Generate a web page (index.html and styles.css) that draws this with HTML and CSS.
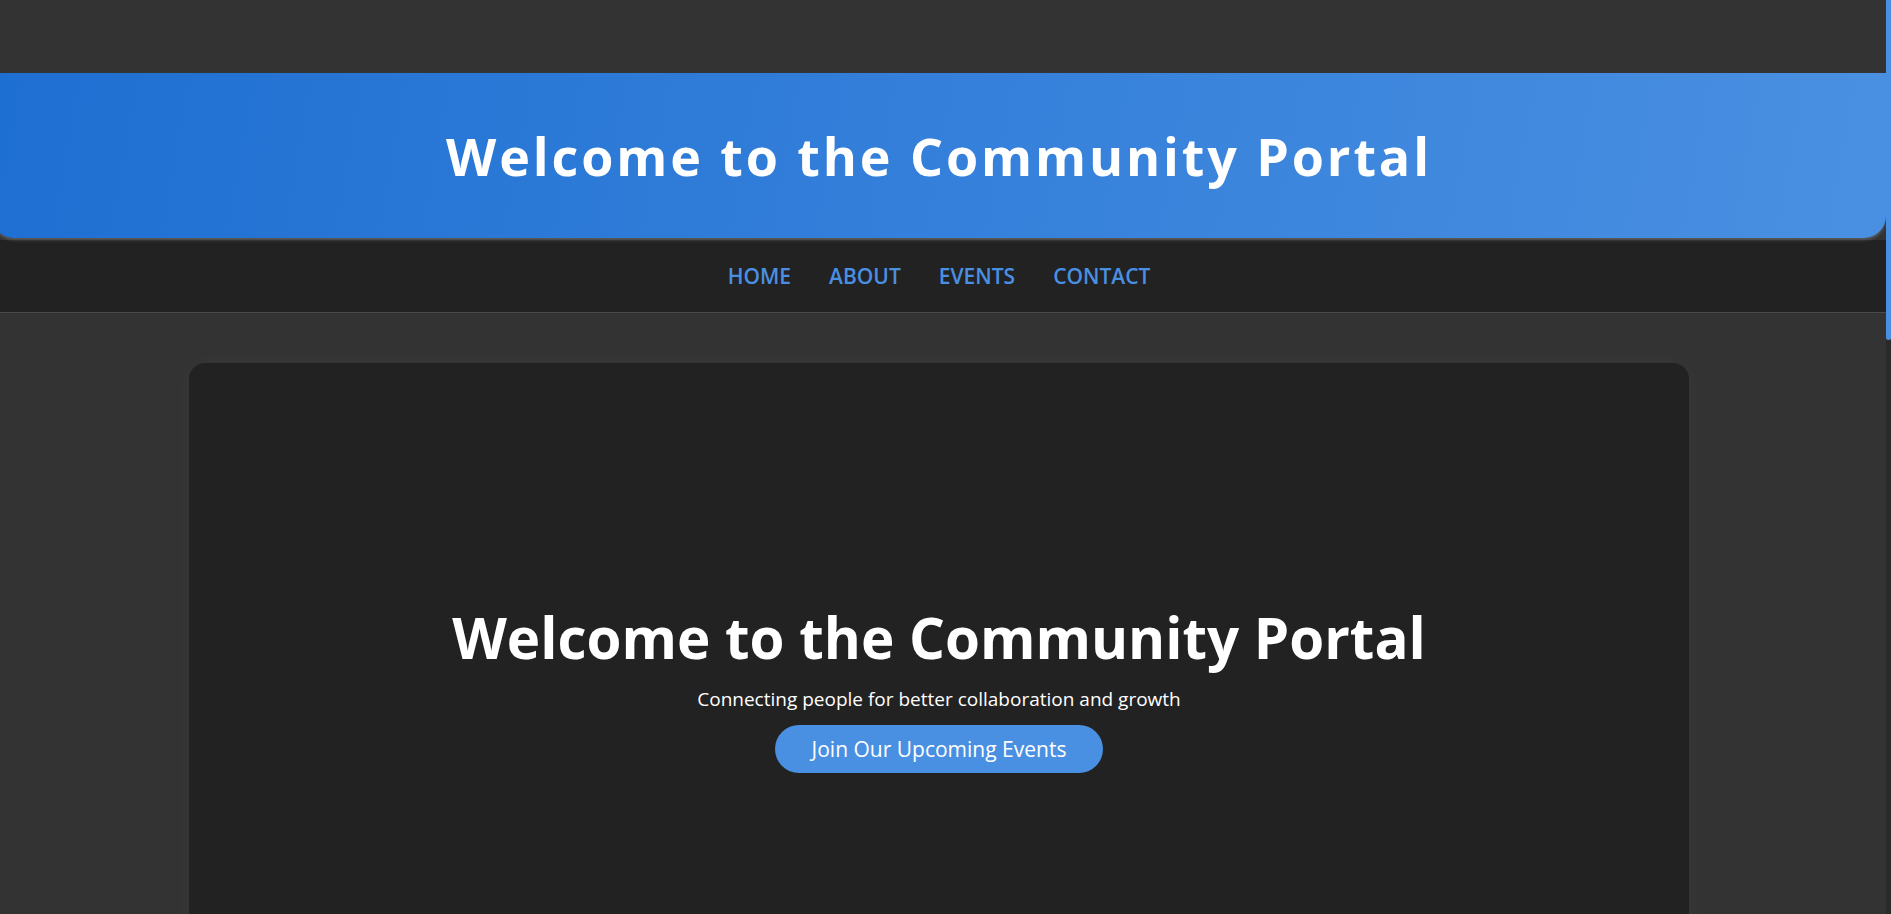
FILE: index.html
```html
<!DOCTYPE html>
<html lang="en">
<head>
<meta charset="utf-8">
<title>Community Portal</title>
<link rel="stylesheet" href="styles.css">
</head>
<body>
<div class="page">
  <header class="site-header">
    <h1 class="site-title">Welcome to the Community Portal</h1>
  </header>
  <nav class="site-nav">
    <a href="#home">Home</a>
    <a href="#about">About</a>
    <a href="#events">Events</a>
    <a href="#contact">Contact</a>
  </nav>
  <main class="main">
    <section class="hero card" id="home">
      <h2 class="hero-title">Welcome to the Community Portal</h2>
      <p class="hero-sub">Connecting people for better collaboration and growth</p>
      <a class="btn" href="#events">Join Our Upcoming Events</a>
    </section>
    <section class="card section" id="about">
      <h2 class="section-title">About Us</h2>
      <p class="section-text">We are a community dedicated to bringing people together through shared events, workshops and local initiatives.</p>
    </section>
    <section class="card section" id="events">
      <h2 class="section-title">Upcoming Events</h2>
      <p class="section-text">Browse our calendar of meetups, volunteering days and learning sessions.</p>
    </section>
    <section class="card section" id="contact">
      <h2 class="section-title">Contact</h2>
      <p class="section-text">Have a question? Reach out and we will get back to you soon.</p>
    </section>
  </main>
</div>
<div class="scroll-track" aria-hidden="true"><div class="scroll-thumb"></div></div>
</body>
</html>
```
FILE: styles.css
```css
body {
  margin: 0;
  background: #333333;
  color: #ffffff;
  font-family: "Open Sans", "Noto Sans", sans-serif;
}
.page {
  margin-left: -8px;
  margin-right: 5px;
  padding-top: 73px;
}
.scroll-track {
  position: fixed;
  top: 0;
  right: 0;
  width: 5px;
  height: 100vh;
  background: #2a2a2a;
  z-index: 10;
}
.scroll-thumb {
  height: 340px;
  background: #4a90e2;
  border-radius: 0 0 5px 5px;
}
.site-header {
  height: 165px;
  display: flex;
  align-items: center;
  justify-content: center;
  background: linear-gradient(100deg, #1e6fd2 0%, #4a90e2 100%);
  border-radius: 0 0 22px 22px;
  box-shadow: 0 2px 3px rgba(110, 110, 110, 0.7);
  position: relative;
  z-index: 1;
}
.site-title {
  margin: 0;
  font-size: 52px;
  font-weight: 700;
  letter-spacing: 2.9px;
  color: #ffffff;
}
.site-nav {
  margin-top: 2px;
  height: 72px;
  background: #222222;
  border-bottom: 1px solid #4a4a4a;
  display: flex;
  align-items: center;
  justify-content: center;
  gap: 38px;
}
.site-nav a {
  color: #4a90e2;
  text-decoration: none;
  text-transform: uppercase;
  font-size: 21px;
  font-weight: 600;
}
.main {
  padding: 50px 0 60px;
  display: flex;
  flex-direction: column;
  gap: 40px;
}
.card {
  width: 1500px;
  margin: 0 auto;
  background: #222222;
  border-radius: 16px;
  box-shadow: 0 0 25px rgba(255, 255, 255, 0.03);
}
.hero {
  height: 650px;
  display: flex;
  flex-direction: column;
  align-items: center;
  justify-content: center;
  box-sizing: border-box;
}
.hero-title {
  margin: 0 0 13px;
  font-size: 56.5px;
  font-weight: 700;
  line-height: 1.25;
}
.hero-sub {
  margin: 0 0 12px;
  font-size: 19px;
  line-height: 1.35;
}
.btn {
  display: inline-block;
  background: #4a90e2;
  color: #ffffff;
  text-decoration: none;
  font-size: 21px;
  line-height: 28px;
  padding: 10px 37px;
  border-radius: 30px;
}
.section {
  padding: 60px 80px;
  box-sizing: border-box;
  min-height: 440px;
}
.section-title {
  margin: 0 0 20px;
  font-size: 36px;
}
.section-text {
  margin: 0;
  font-size: 18px;
  color: #cccccc;
}
```
